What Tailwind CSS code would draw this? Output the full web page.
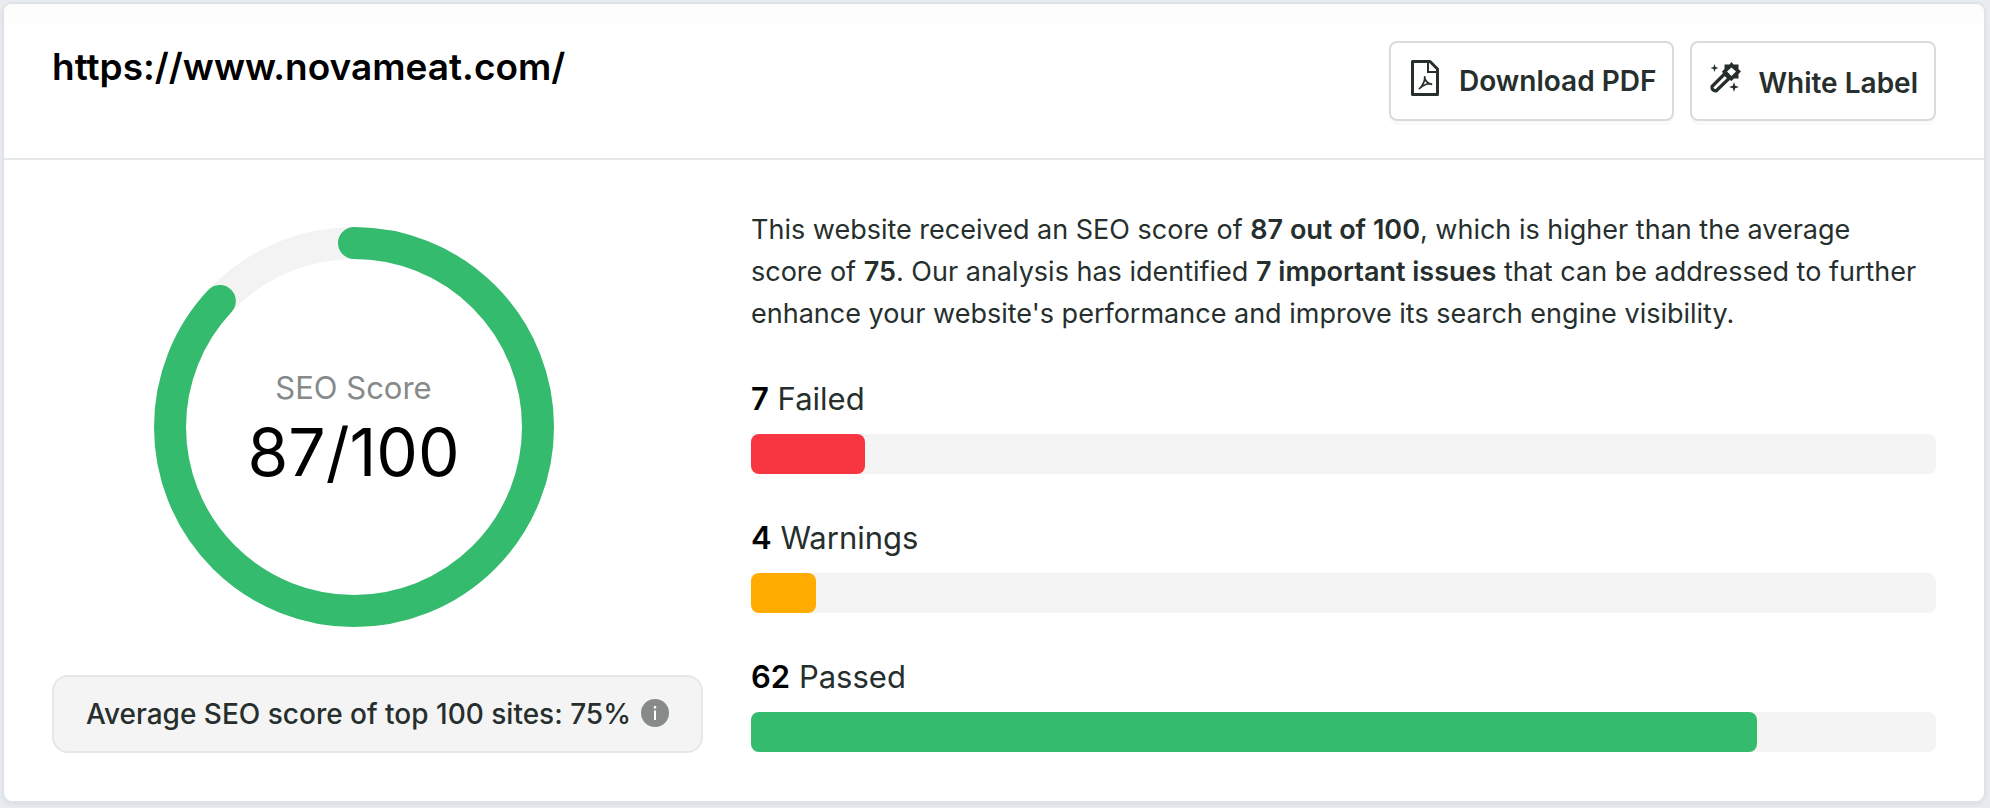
<!DOCTYPE html>
<html lang="en">
<head>
<meta charset="utf-8">
<meta name="viewport" content="width=device-width, initial-scale=1">
<title>SEO report</title>
<script src="https://cdn.jsdelivr.net/npm/@tailwindcss/browser@4"></script>
</head>
<body class="bg-[#e8ebef] p-1 pr-1.5 pb-1.5 font-['Inter',sans-serif] text-[#262f2d]">
<main class="rounded-lg bg-white shadow-[0_0_0_2px_#dde3e6,0_3px_5px_#d5dbdf]">
  <header class="flex items-start justify-between border-b-2 border-[#e6e7e7] rounded-t-lg bg-linear-to-b from-[#fcfcfc] to-white to-20% px-12 pt-[37px] pb-[37px]">
    <h1 class="text-[37px] leading-[52px] font-semibold text-black">https://www.novameat.com/</h1>
    <div class="flex gap-4">
      <button type="button" class="flex h-20 items-center gap-5 rounded-lg border-2 border-[#d9dada] bg-white pr-4 pl-5 text-[28px] font-semibold shadow-[0_4px_0_#fafafa]">
        <svg class="mb-1.5 h-9 w-7" viewBox="0 0 28 36" fill="none" stroke="currentColor" aria-hidden="true">
          <path stroke-width="3" stroke-linejoin="round" d="M1.5 1.5H19L26.500 9V34.500H1.500Z"/>
          <path stroke-width="2" d="M17 2V12H27"/>
          <path stroke-width="1.800" stroke-linejoin="round" d="M8.500 28.500C10.500 27.500 14.500 20.500 13.800 16.800C13 18.500 16 24 20.500 24.300C19 22.300 12 24.800 8.500 28.500Z"/>
        </svg>
        <span>Download PDF</span>
      </button>
      <button type="button" class="flex h-20 items-center gap-4 rounded-lg border-2 border-[#d9dada] bg-white pr-4 pl-4.5 text-[28px] font-semibold shadow-[0_4px_0_#fafafa]">
        <svg class="mb-2 size-8" viewBox="0 0 32 32" fill="currentColor" aria-hidden="true">
          <path d="M4.500 3L5.500 6L8.500 7L5.500 8L4.500 11L3.500 8L.5 7L3.500 6Z"/>
          <path d="M24 21L25.200 24.800L29 26L25.200 27.200L24 31L22.800 27.200L19 26L22.800 24.800Z"/>
          <path fill-rule="evenodd" d="M21.500 1L23.500 3.500L28.500 3.500V8L31 10.500L28.500 13V17.500H24L21.500 20L18 18L14 14.500L12 10.500L14.500 8V3.500H19.500ZM21.500 6.500L17 10.500L21.500 15L26 10.500Z"/>
          <path fill="none" stroke="currentColor" stroke-width="3.200" stroke-linejoin="round" d="M15 12.500L2 25.500Q1.500 29.500 6 30L19.500 17Z"/>
        </svg>
        <span class="mt-1">White Label</span>
      </button>
    </div>
  </header>

  <div class="grid grid-cols-[minmax(0,651fr)_minmax(0,1185fr)] gap-12 p-12">
    <section class="flex flex-col gap-12 pt-[19px]" aria-label="Score">
      <div class="pr-12">
        <div class="relative mx-auto size-[400px]">
          <svg class="size-full" viewBox="0 0 400 400" fill="none" stroke-width="32" aria-hidden="true">
            <circle cx="200" cy="200" r="184" stroke="#f3f3f3"/>
            <circle cx="200" cy="200" r="184" stroke="#34bb6d" stroke-linecap="round" pathLength="100" stroke-dasharray="87 100" transform="rotate(-90 200 200)"/>
          </svg>
          <div class="absolute inset-0 flex flex-col items-center justify-center pt-0.5 text-center">
            <p class="text-[31px] leading-12 text-[#868a89]">SEO Score</p>
            <p class="text-[66px] leading-20 text-black">87/100</p>
          </div>
        </div>
      </div>
      <p class="flex h-[78px] items-center gap-2.5 rounded-2xl border-2 border-[#e6e7e7] bg-[#f4f4f4] px-8 text-[28px] font-medium whitespace-nowrap">
        Average SEO score of top 100 sites: 75%
        <svg class="mb-0.5 size-7 shrink-0" viewBox="0 0 28 28" role="img" aria-label="Info">
          <circle cx="14" cy="14" r="14" fill="#868a89"/>
          <path fill="#fff" d="M12.800 7h2.400v2.400h-2.400zM13 11.500h2V21h-2z"/>
        </svg>
      </p>
    </section>

    <section class="flex flex-col gap-10 pt-px" aria-label="Summary">
      <p class="pr-3 text-[27px] leading-[42px]">This website received an SEO score of <strong class="font-semibold">87 out of 100</strong>, which is higher than the average score of <strong class="font-semibold">75</strong>. Our analysis has identified <strong class="font-semibold">7 important issues</strong> that can be addressed to further enhance your website's performance and improve its search engine visibility.</p>
      <div>
        <p class="mb-[11px] text-[31px] leading-12"><strong class="font-semibold text-black">7</strong> Failed</p>
        <div class="h-10 rounded-lg bg-[#f4f4f4]"><div class="h-full rounded-lg bg-[#f73641]" style="width:9.6%"></div></div>
      </div>
      <div>
        <p class="mb-[11px] text-[31px] leading-12"><strong class="font-semibold text-black">4</strong> Warnings</p>
        <div class="h-10 rounded-lg bg-[#f4f4f4]"><div class="h-full rounded-lg bg-[#ffab00]" style="width:5.48%"></div></div>
      </div>
      <div>
        <p class="mb-[11px] text-[31px] leading-12"><strong class="font-semibold text-black">62</strong> Passed</p>
        <div class="h-10 rounded-lg bg-[#f4f4f4]"><div class="h-full rounded-lg bg-[#34bb6d]" style="width:84.9%"></div></div>
      </div>
    </section>
  </div>
</main>
</body>
</html>
